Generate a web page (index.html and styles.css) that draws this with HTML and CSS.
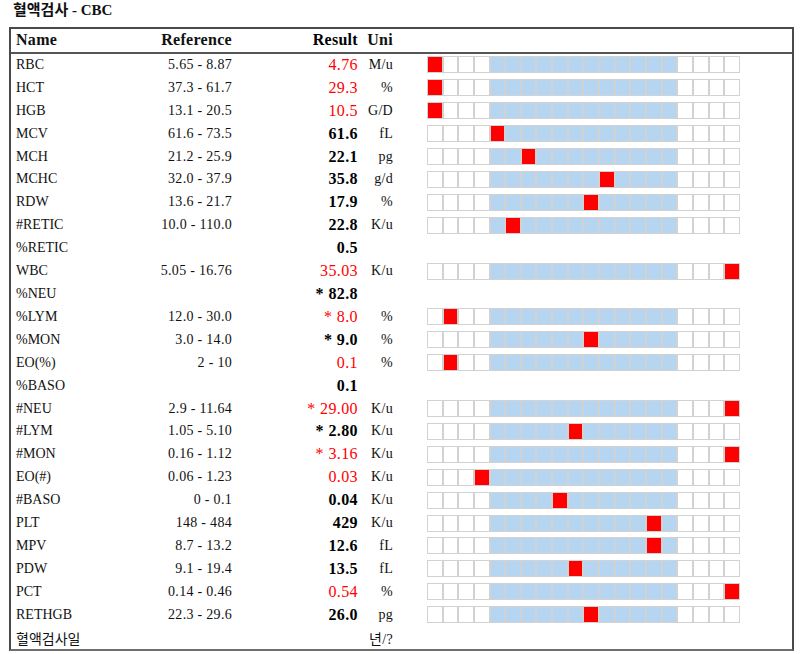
FILE: index.html
```html
<!DOCTYPE html>
<html lang="ko">
<head>
<meta charset="utf-8">
<title>혈액검사 - CBC</title>
<link rel="stylesheet" href="styles.css">
</head>
<body>
<div class="page">
  <h1 class="title">혈액검사 - CBC</h1>
  <div class="report">
    <div class="row head"><span class="name">Name</span><span class="ref">Reference</span><span class="res">Result</span><span class="unit">Uni</span></div>

    <div class="row"><span class="name">RBC</span><span class="ref">5.65 - 8.87</span><span class="res hi">4.76</span><span class="unit">M/u</span>
      <div class="bar"><i class="r"></i><i></i><i></i><i></i><i class="b"></i><i class="b"></i><i class="b"></i><i class="b"></i><i class="b"></i><i class="b"></i><i class="b"></i><i class="b"></i><i class="b"></i><i class="b"></i><i class="b"></i><i class="b"></i><i></i><i></i><i></i><i></i></div></div>

    <div class="row"><span class="name">HCT</span><span class="ref">37.3 - 61.7</span><span class="res hi">29.3</span><span class="unit">%</span>
      <div class="bar"><i class="r"></i><i></i><i></i><i></i><i class="b"></i><i class="b"></i><i class="b"></i><i class="b"></i><i class="b"></i><i class="b"></i><i class="b"></i><i class="b"></i><i class="b"></i><i class="b"></i><i class="b"></i><i class="b"></i><i></i><i></i><i></i><i></i></div></div>

    <div class="row"><span class="name">HGB</span><span class="ref">13.1 - 20.5</span><span class="res hi">10.5</span><span class="unit">G/D</span>
      <div class="bar"><i class="r"></i><i></i><i></i><i></i><i class="b"></i><i class="b"></i><i class="b"></i><i class="b"></i><i class="b"></i><i class="b"></i><i class="b"></i><i class="b"></i><i class="b"></i><i class="b"></i><i class="b"></i><i class="b"></i><i></i><i></i><i></i><i></i></div></div>

    <div class="row"><span class="name">MCV</span><span class="ref">61.6 - 73.5</span><span class="res">61.6</span><span class="unit">fL</span>
      <div class="bar"><i></i><i></i><i></i><i></i><i class="r"></i><i class="b"></i><i class="b"></i><i class="b"></i><i class="b"></i><i class="b"></i><i class="b"></i><i class="b"></i><i class="b"></i><i class="b"></i><i class="b"></i><i class="b"></i><i></i><i></i><i></i><i></i></div></div>

    <div class="row"><span class="name">MCH</span><span class="ref">21.2 - 25.9</span><span class="res">22.1</span><span class="unit">pg</span>
      <div class="bar"><i></i><i></i><i></i><i></i><i class="b"></i><i class="b"></i><i class="r"></i><i class="b"></i><i class="b"></i><i class="b"></i><i class="b"></i><i class="b"></i><i class="b"></i><i class="b"></i><i class="b"></i><i class="b"></i><i></i><i></i><i></i><i></i></div></div>

    <div class="row"><span class="name">MCHC</span><span class="ref">32.0 - 37.9</span><span class="res">35.8</span><span class="unit">g/d</span>
      <div class="bar"><i></i><i></i><i></i><i></i><i class="b"></i><i class="b"></i><i class="b"></i><i class="b"></i><i class="b"></i><i class="b"></i><i class="b"></i><i class="r"></i><i class="b"></i><i class="b"></i><i class="b"></i><i class="b"></i><i></i><i></i><i></i><i></i></div></div>

    <div class="row"><span class="name">RDW</span><span class="ref">13.6 - 21.7</span><span class="res">17.9</span><span class="unit">%</span>
      <div class="bar"><i></i><i></i><i></i><i></i><i class="b"></i><i class="b"></i><i class="b"></i><i class="b"></i><i class="b"></i><i class="b"></i><i class="r"></i><i class="b"></i><i class="b"></i><i class="b"></i><i class="b"></i><i class="b"></i><i></i><i></i><i></i><i></i></div></div>

    <div class="row"><span class="name">#RETIC</span><span class="ref">10.0 - 110.0</span><span class="res">22.8</span><span class="unit">K/u</span>
      <div class="bar"><i></i><i></i><i></i><i></i><i class="b"></i><i class="r"></i><i class="b"></i><i class="b"></i><i class="b"></i><i class="b"></i><i class="b"></i><i class="b"></i><i class="b"></i><i class="b"></i><i class="b"></i><i class="b"></i><i></i><i></i><i></i><i></i></div></div>

    <div class="row"><span class="name">%RETIC</span><span class="ref"></span><span class="res">0.5</span><span class="unit"></span></div>

    <div class="row"><span class="name">WBC</span><span class="ref">5.05 - 16.76</span><span class="res hi">35.03</span><span class="unit">K/u</span>
      <div class="bar"><i></i><i></i><i></i><i></i><i class="b"></i><i class="b"></i><i class="b"></i><i class="b"></i><i class="b"></i><i class="b"></i><i class="b"></i><i class="b"></i><i class="b"></i><i class="b"></i><i class="b"></i><i class="b"></i><i></i><i></i><i></i><i class="r"></i></div></div>

    <div class="row"><span class="name">%NEU</span><span class="ref"></span><span class="res">* 82.8</span><span class="unit"></span></div>

    <div class="row"><span class="name">%LYM</span><span class="ref">12.0 - 30.0</span><span class="res hi">* 8.0</span><span class="unit">%</span>
      <div class="bar"><i></i><i class="r"></i><i></i><i></i><i class="b"></i><i class="b"></i><i class="b"></i><i class="b"></i><i class="b"></i><i class="b"></i><i class="b"></i><i class="b"></i><i class="b"></i><i class="b"></i><i class="b"></i><i class="b"></i><i></i><i></i><i></i><i></i></div></div>

    <div class="row"><span class="name">%MON</span><span class="ref">3.0 - 14.0</span><span class="res">* 9.0</span><span class="unit">%</span>
      <div class="bar"><i></i><i></i><i></i><i></i><i class="b"></i><i class="b"></i><i class="b"></i><i class="b"></i><i class="b"></i><i class="b"></i><i class="r"></i><i class="b"></i><i class="b"></i><i class="b"></i><i class="b"></i><i class="b"></i><i></i><i></i><i></i><i></i></div></div>

    <div class="row"><span class="name">EO(%)</span><span class="ref">2 - 10</span><span class="res hi">0.1</span><span class="unit">%</span>
      <div class="bar"><i></i><i class="r"></i><i></i><i></i><i class="b"></i><i class="b"></i><i class="b"></i><i class="b"></i><i class="b"></i><i class="b"></i><i class="b"></i><i class="b"></i><i class="b"></i><i class="b"></i><i class="b"></i><i class="b"></i><i></i><i></i><i></i><i></i></div></div>

    <div class="row"><span class="name">%BASO</span><span class="ref"></span><span class="res">0.1</span><span class="unit"></span></div>

    <div class="row"><span class="name">#NEU</span><span class="ref">2.9 - 11.64</span><span class="res hi">* 29.00</span><span class="unit">K/u</span>
      <div class="bar"><i></i><i></i><i></i><i></i><i class="b"></i><i class="b"></i><i class="b"></i><i class="b"></i><i class="b"></i><i class="b"></i><i class="b"></i><i class="b"></i><i class="b"></i><i class="b"></i><i class="b"></i><i class="b"></i><i></i><i></i><i></i><i class="r"></i></div></div>

    <div class="row"><span class="name">#LYM</span><span class="ref">1.05 - 5.10</span><span class="res">* 2.80</span><span class="unit">K/u</span>
      <div class="bar"><i></i><i></i><i></i><i></i><i class="b"></i><i class="b"></i><i class="b"></i><i class="b"></i><i class="b"></i><i class="r"></i><i class="b"></i><i class="b"></i><i class="b"></i><i class="b"></i><i class="b"></i><i class="b"></i><i></i><i></i><i></i><i></i></div></div>

    <div class="row"><span class="name">#MON</span><span class="ref">0.16 - 1.12</span><span class="res hi">* 3.16</span><span class="unit">K/u</span>
      <div class="bar"><i></i><i></i><i></i><i></i><i class="b"></i><i class="b"></i><i class="b"></i><i class="b"></i><i class="b"></i><i class="b"></i><i class="b"></i><i class="b"></i><i class="b"></i><i class="b"></i><i class="b"></i><i class="b"></i><i></i><i></i><i></i><i class="r"></i></div></div>

    <div class="row"><span class="name">EO(#)</span><span class="ref">0.06 - 1.23</span><span class="res hi">0.03</span><span class="unit">K/u</span>
      <div class="bar"><i></i><i></i><i></i><i class="r"></i><i class="b"></i><i class="b"></i><i class="b"></i><i class="b"></i><i class="b"></i><i class="b"></i><i class="b"></i><i class="b"></i><i class="b"></i><i class="b"></i><i class="b"></i><i class="b"></i><i></i><i></i><i></i><i></i></div></div>

    <div class="row"><span class="name">#BASO</span><span class="ref">0 - 0.1</span><span class="res">0.04</span><span class="unit">K/u</span>
      <div class="bar"><i></i><i></i><i></i><i></i><i class="b"></i><i class="b"></i><i class="b"></i><i class="b"></i><i class="r"></i><i class="b"></i><i class="b"></i><i class="b"></i><i class="b"></i><i class="b"></i><i class="b"></i><i class="b"></i><i></i><i></i><i></i><i></i></div></div>

    <div class="row"><span class="name">PLT</span><span class="ref">148 - 484</span><span class="res">429</span><span class="unit">K/u</span>
      <div class="bar"><i></i><i></i><i></i><i></i><i class="b"></i><i class="b"></i><i class="b"></i><i class="b"></i><i class="b"></i><i class="b"></i><i class="b"></i><i class="b"></i><i class="b"></i><i class="b"></i><i class="r"></i><i class="b"></i><i></i><i></i><i></i><i></i></div></div>

    <div class="row"><span class="name">MPV</span><span class="ref">8.7 - 13.2</span><span class="res">12.6</span><span class="unit">fL</span>
      <div class="bar"><i></i><i></i><i></i><i></i><i class="b"></i><i class="b"></i><i class="b"></i><i class="b"></i><i class="b"></i><i class="b"></i><i class="b"></i><i class="b"></i><i class="b"></i><i class="b"></i><i class="r"></i><i class="b"></i><i></i><i></i><i></i><i></i></div></div>

    <div class="row"><span class="name">PDW</span><span class="ref">9.1 - 19.4</span><span class="res">13.5</span><span class="unit">fL</span>
      <div class="bar"><i></i><i></i><i></i><i></i><i class="b"></i><i class="b"></i><i class="b"></i><i class="b"></i><i class="b"></i><i class="r"></i><i class="b"></i><i class="b"></i><i class="b"></i><i class="b"></i><i class="b"></i><i class="b"></i><i></i><i></i><i></i><i></i></div></div>

    <div class="row"><span class="name">PCT</span><span class="ref">0.14 - 0.46</span><span class="res hi">0.54</span><span class="unit">%</span>
      <div class="bar"><i></i><i></i><i></i><i></i><i class="b"></i><i class="b"></i><i class="b"></i><i class="b"></i><i class="b"></i><i class="b"></i><i class="b"></i><i class="b"></i><i class="b"></i><i class="b"></i><i class="b"></i><i class="b"></i><i></i><i></i><i></i><i class="r"></i></div></div>

    <div class="row"><span class="name">RETHGB</span><span class="ref">22.3 - 29.6</span><span class="res">26.0</span><span class="unit">pg</span>
      <div class="bar"><i></i><i></i><i></i><i></i><i class="b"></i><i class="b"></i><i class="b"></i><i class="b"></i><i class="b"></i><i class="b"></i><i class="r"></i><i class="b"></i><i class="b"></i><i class="b"></i><i class="b"></i><i class="b"></i><i></i><i></i><i></i><i></i></div></div>

    <div class="row"><span class="name ko">혈액검사일</span><span class="ref"></span><span class="res"></span><span class="unit ko">년/?</span></div>
  </div>
</div>
</body>
</html>
```

FILE: styles.css
```css
html, body {
  margin: 0;
  padding: 0;
  background: #ffffff;
}

body {
  font-family: "Liberation Serif", "Noto Sans CJK KR", serif;
  font-size: 14px;
  color: #111111;
}

.page {
  padding: 0 6px 0 9px;
}

.title {
  margin: 0;
  padding-left: 4px;
  height: 27px;
  font-size: 15px;
  line-height: 20px;
  font-weight: bold;
  color: #111111;
}

.report {
  width: 785px;
  box-sizing: border-box;
  border: 2px solid #4a4a4a;
  border-bottom-color: #6e6e6e;
}

.row {
  display: grid;
  grid-template-columns: 140px 81px 126px 35px 1fr;
  align-items: center;
  height: 22.92px;
  white-space: nowrap;
}

.row.head {
  height: 22.5px;
  border-bottom: 2px solid #555555;
  font-size: 16px;
  font-weight: bold;
  letter-spacing: 0.3px;
}

.name {
  padding-left: 5px;
}

.ref {
  text-align: right;
  letter-spacing: 0.3px;
}

.res {
  text-align: right;
  font-size: 16px;
  font-weight: bold;
  letter-spacing: 0.4px;
  color: #000000;
}

.row.head .res {
  letter-spacing: 0.3px;
}

.res.hi {
  font-weight: normal;
  color: #ff0000;
}

.unit {
  text-align: right;
  letter-spacing: 0.3px;
}

.ko {
  font-size: 14px;
}

.bar {
  display: flex;
  margin-left: 34px;
  width: 313px;
}

.bar i {
  display: block;
  flex: 0 0 15.65px;
  height: 17px;
  box-sizing: border-box;
  border: 1px solid #d2d2d2;
  background: #ffffff;
}

.bar i.b {
  background: #b5d5f1;
}

.bar i.r {
  background: #ff0000;
}
```
